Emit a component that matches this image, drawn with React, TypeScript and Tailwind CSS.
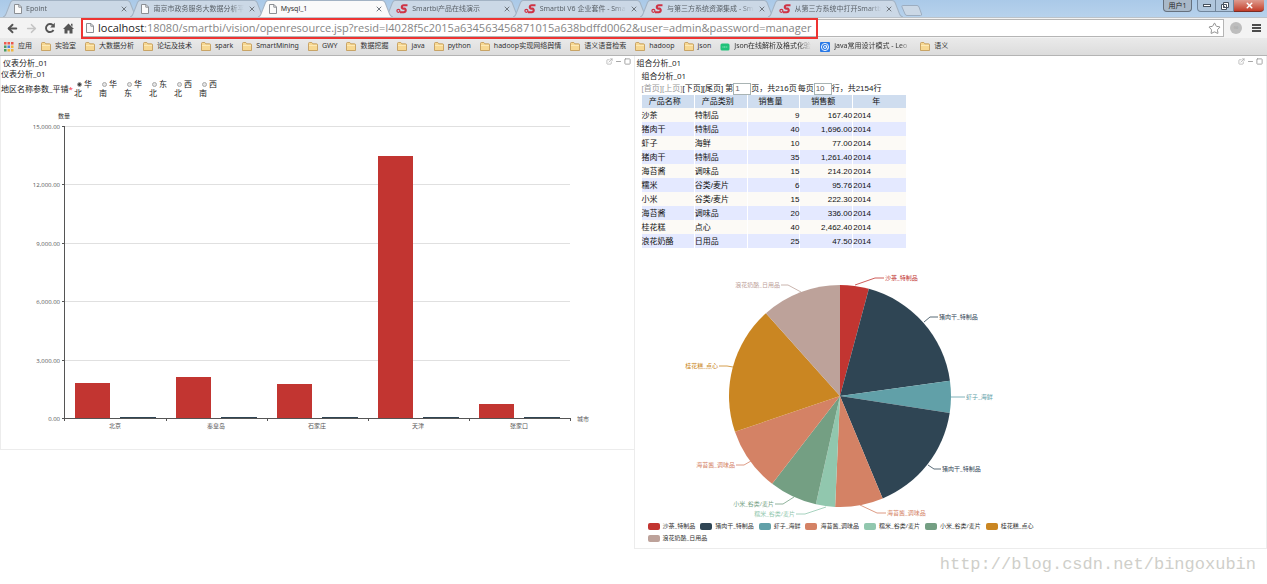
import { ArrowLeft, ArrowRight, ExternalLink, Minus, Square, Star, X } from "lucide-react";
import { useState } from "react";

const FONT = "font-['Open_Sans','Noto_Sans_CJK_SC',sans-serif]";
const CHROME_FONT = "font-['Noto_Sans','Noto_Sans_CJK_SC',sans-serif]";
const TABLE_FONT = "font-['Liberation_Sans','Noto_Sans_CJK_SC',sans-serif]";

const TABS = [
  { title: "Epoint", icon: "page" },
  { title: "南京市政务服务大数据分析平台", icon: "page" },
  { title: "Mysql_1", icon: "page" },
  { title: "Smartbi产品在线演示", icon: "smartbi" },
  { title: "Smartbi V6 企业套件 - Smartbi", icon: "smartbi" },
  { title: "与第三方系统资源集成 - Smartbi", icon: "smartbi" },
  { title: "从第三方系统中打开Smartbi", icon: "smartbi" },
];

const BOOKMARKS = [
  { title: "应用", icon: "apps" },
  { title: "实验室", icon: "folder" },
  { title: "大数据分析", icon: "folder" },
  { title: "论坛及技术", icon: "folder" },
  { title: "spark", icon: "folder" },
  { title: "SmartMining", icon: "folder" },
  { title: "GWY", icon: "folder" },
  { title: "数据挖掘", icon: "folder" },
  { title: "java", icon: "folder" },
  { title: "python", icon: "folder" },
  { title: "hadoop实现网络舆情", icon: "folder" },
  { title: "语义语音检索", icon: "folder" },
  { title: "hadoop", icon: "folder" },
  { title: "json", icon: "folder" },
  { title: "Json在线解析及格式化验证", icon: "json" },
  { title: "java常用设计模式 - Leo", icon: "at" },
  { title: "语义", icon: "folder" },
];

const REGIONS = ["华北", "华南", "华东", "东北", "西北", "西南"];

const CITIES = [
  { name: "北京", value: 1785 },
  { name: "秦皇岛", value: 2105 },
  { name: "石家庄", value: 1750 },
  { name: "天津", value: 13480 },
  { name: "张家口", value: 740 },
];

const COLUMNS = ["产品名称", "产品类别", "销售量", "销售额", "年"];

const ROWS = [
  ["沙茶", "特制品", "9", "167.40", "2014"],
  ["猪肉干", "特制品", "40", "1,696.00", "2014"],
  ["虾子", "海鲜", "10", "77.00", "2014"],
  ["猪肉干", "特制品", "35", "1,261.40", "2014"],
  ["海苔酱", "调味品", "15", "214.20", "2014"],
  ["糯米", "谷类/麦片", "6", "95.76", "2014"],
  ["小米", "谷类/麦片", "15", "222.30", "2014"],
  ["海苔酱", "调味品", "20", "336.00", "2014"],
  ["桂花糕", "点心", "40", "2,462.40", "2014"],
  ["浪花奶酪", "日用品", "25", "47.50", "2014"],
];

// label line: from the rim, to the elbow, to the text
const SLICES = [
  { name: "沙茶_特制品", value: 9, color: "#c23531", line: "220,37 240,30 249,30", x: 250, y: 30, side: "start" },
  { name: "猪肉干_特制品", value: 40, color: "#2f4554", line: "289,74 295,69 303,69", x: 304, y: 69, side: "start" },
  { name: "虾子_海鲜", value: 10, color: "#61a0a8", line: "316,149 322,149 330,149", x: 331, y: 149, side: "start" },
  { name: "猪肉干_特制品", value: 35, color: "#2f4554", line: "293,217 299,221 306,221", x: 307, y: 221, side: "start" },
  { name: "海苔酱_调味品", value: 15, color: "#d48265", line: "225,257 242,265 251,265", x: 252, y: 265, side: "start" },
  { name: "糯米_谷类/麦片", value: 6, color: "#91c7ae", line: "191,259 170,266 161,266", x: 160, y: 266, side: "end" },
  { name: "小米_谷类/麦片", value: 15, color: "#749f83", line: "159,249 148,256 140,256", x: 139, y: 256, side: "end" },
  { name: "海苔酱_调味品", value: 20, color: "#d48265", line: "116,213 109,217 101,217", x: 100, y: 217, side: "end" },
  { name: "桂花糕_点心", value: 40, color: "#ca8622", line: "98,119 92,118 84,118", x: 83, y: 118, side: "end" },
  { name: "浪花奶酪_日用品", value: 25, color: "#bda29a", line: "166,44 153,37 146,37", x: 145, y: 37, side: "end" },
];

const LEGEND = [0, 1, 2, 4, 5, 6, 8, 9].map((i) => SLICES[i]);

function PageIcon() {
  return (
    <svg width="8" height="10" viewBox="0 0 8 10" className="flex-none">
      <path d="M.5.5h4.5l2.5 2.5v6.5h-7z" fill="#fafafa" stroke="#8b8f94" />
      <path d="M4.8.5v2.7h2.7" fill="none" stroke="#8b8f94" />
    </svg>
  );
}

function SmartbiIcon() {
  return (
    <svg width="12" height="10" viewBox="0 0 12 10" className="flex-none">
      <path d="M11.500 1.200H7.800C5.300 1.200 5.100 4.400 7.500 4.600h.8c2.200.2 1.800 3.600-.5 3.600H4" fill="none" stroke="#cf3345" strokeWidth="2.100" />
      <circle cx="2.400" cy="6.800" r="1.500" fill="none" stroke="#cf3345" strokeWidth="1.200" />
    </svg>
  );
}

const APP_COLORS = ["#ef5a4c", "#ef5a4c", "#e9584b", "#4b9b62", "#4b83d8", "#f0b63c", "#4b9b62", "#f0b63c", "#f0b63c"];

function BookmarkIcon({ icon }: { icon: string }) {
  if (icon === "apps") {
    return (
      <svg width="10" height="10" viewBox="0 0 10 10" className="flex-none">
        {APP_COLORS.map((color, i) => (
          <rect key={i} x={(i % 3) * 3.5} y={Math.floor(i / 3) * 3.5} width="2.5" height="2.5" fill={color} />
        ))}
      </svg>
    );
  }
  if (icon === "json") {
    return (
      <svg width="10" height="10" viewBox="0 0 10 10" className="flex-none">
        <rect x=".5" y="1.5" width="9" height="7" rx="1.5" fill="#22c27a" />
        <path d="M2.5 5h5" stroke="#a5eecb" strokeDasharray="1 .6" />
      </svg>
    );
  }
  if (icon === "at") {
    return (
      <svg width="10" height="10" viewBox="0 0 10 10" className="flex-none">
        <rect width="10" height="10" rx="1" fill="#2878e6" />
        <circle cx="5" cy="5" r="3.6" fill="none" stroke="#fff" strokeWidth=".9" />
        <circle cx="5" cy="5" r="1.5" fill="none" stroke="#fff" strokeWidth=".9" />
        <path d="M6.7 3.2v2.4q.3 1.2 1.6.6" fill="none" stroke="#fff" strokeWidth=".8" />
      </svg>
    );
  }
  return (
    <svg width="10" height="9" viewBox="0 0 10 9" className="flex-none">
      <path d="M.5 8.5v-7q0-1 1-1h2.3l1 1.3h3.7q1 0 1 1v5.7z" fill="#f7d892" stroke="#bf9650" strokeWidth=".8" />
      <path d="M1 3h8v1H1z" fill="#fde9b6" />
    </svg>
  );
}

function TabStrip() {
  return (
    <div className="flex h-[17px] justify-between bg-gradient-to-b from-[#aac9e8] to-[#b7d2ec] pl-[3px]">
      <div className={`flex min-w-0 max-w-[920px] flex-1 ${CHROME_FONT}`}>
        {TABS.map((tab, i) => {
          const active = i === 2;
          return (
            <div key={i} className={active ? "relative z-10 min-w-0 flex-1" : "relative min-w-0 flex-1"}>
              <svg viewBox="0 0 135 17" preserveAspectRatio="none" className="absolute top-0 left-0 h-[17px] w-[106%]">
                <path
                  d="M0 17Q2 16.500 3 14L7.500 2.500Q8.500.5 10 .5H124Q126 .5 127 2.500L131.500 14Q132.500 16.500 135 17"
                  fill={active ? "#fafafa" : "#cbd8e6"}
                  stroke="#a3b3c4"
                />
              </svg>
              <button type="button" className="relative flex h-[17px] w-full items-center pt-px pr-[2px] pl-[11px] text-left">
                {tab.icon === "page" ? <PageIcon /> : <SmartbiIcon />}
                <span
                  className={
                    active
                      ? "ml-1 flex-1 text-[7px] whitespace-nowrap text-[#333]"
                      : "ml-1 flex-1 overflow-hidden mask-r-from-85% text-[7px] whitespace-nowrap text-[#5b6269]"
                  }
                >
                  {tab.title}
                </span>
                <X size={8} strokeWidth={3} className="ml-1 flex-none text-[#70777f]" />
              </button>
            </div>
          );
        })}
        <button type="button" aria-label="New tab" className="mt-[3px] ml-[6px] w-[22px]">
          <svg width="22" height="11" viewBox="0 0 22 11">
            <path d="M1.500.5H16q1.500 0 2 1.500l2.500 7q.5 1.500-1 1.500H6q-1.500 0-2-1.500L1 2Q.5.5 1.500.5z" fill="#cbd8e6" stroke="#9cadc0" />
          </svg>
        </button>
      </div>
      <div className="flex h-[12px] pr-[3px] text-[7px] leading-[11px]">
        <button type="button" className="mr-[5px] w-[29px] rounded-b-sm border border-t-0 border-[#66717e] bg-[#a9b9c9] text-[#222]">
          用户1
        </button>
        <button type="button" aria-label="Minimize" className="flex w-[19px] items-center justify-center rounded-bl-sm border border-t-0 border-[#71869c] bg-[#b0c6dc]">
          <span className="h-[3px] w-[8px] border border-[#46525f] bg-white" />
        </button>
        <button type="button" aria-label="Restore" className="flex w-[18px] items-center justify-center border-r border-b border-[#71869c] bg-[#b0c6dc]">
          <svg width="8" height="8" viewBox="0 0 8 8" fill="#fff" stroke="#46525f">
            <path d="M2.500.5h5v5h-5zM.5 2.500h5v5h-5zM2.500 4.500h1v1h-1z" />
          </svg>
        </button>
        <button type="button" aria-label="Close" className="flex w-[30px] items-center justify-center rounded-br-sm border-b border-[#7a2c24] bg-gradient-to-b from-[#dd9a8e] to-[#c23b28]">
          <X size={9} strokeWidth={4} color="#fff" />
        </button>
      </div>
    </div>
  );
}

function Toolbar() {
  const [url, setUrl] = useState(
    ":18080/smartbi/vision/openresource.jsp?resid=I4028f5c2015a634563456871015a638bdffd0062&user=admin&password=manager",
  );
  return (
    <div className="flex h-[21px] items-center border-t border-[#bcc3ca] bg-[#f3f3f3] pl-[6px] text-[#555]">
      <button type="button" aria-label="Back" className="w-[19px]">
        <ArrowLeft size={13} strokeWidth={3.5} />
      </button>
      <button type="button" aria-label="Forward" className="w-[19px] text-[#c4c4c4]">
        <ArrowRight size={13} strokeWidth={3} />
      </button>
      <button type="button" aria-label="Reload" className="w-[19px]">
        <svg width="12" height="12" viewBox="0 0 12 12">
          <path d="M9.500 8A4 4 0 1 1 8.800 3.200" fill="none" stroke="currentColor" strokeWidth="1.900" />
          <path d="M10.800.8v4.700H6.200z" fill="currentColor" />
        </svg>
      </button>
      <button type="button" aria-label="Home" className="w-[18px]">
        <svg width="11" height="11" viewBox="0 0 11 11" fill="currentColor">
          <path d="M5.500.5 11 6H9.500v4.500h-3V7.500h-2v3h-3V6H0zM8 .8h1.500v3L8 2.300z" />
        </svg>
      </button>
      <label className="relative flex h-[18px] flex-1 items-center border border-[#b5b5b5] bg-white pl-[4px] text-[11px]">
        <PageIcon />
        <span className="ml-1 text-[#222]">localhost</span>
        <input
          aria-label="Address"
          value={url}
          onChange={(e) => setUrl(e.target.value)}
          className="min-w-0 flex-1 text-[#858585] outline-none"
        />
        <Star size={13} strokeWidth={1.5} className="mr-[2px] text-[#777]" />
        {/* highlighted part of the address */}
        <span className="pointer-events-none absolute -top-[2px] -left-px h-[21px] w-[737px] border-2 border-[#ee3432]" />
      </label>
      <span className="ml-[6px] flex h-[12px] w-[12px] items-center justify-center rounded-full bg-[#bdbdbd] text-[7px] text-[#a5a5a5]">∞</span>
      <button type="button" aria-label="Menu" className="mr-[6px] ml-[10px] flex w-[9px] flex-col gap-px">
        <span className="h-[2px] bg-[#4c4c4c]" />
        <span className="h-[2px] bg-[#4c4c4c]" />
        <span className="h-[2px] bg-[#4c4c4c]" />
      </button>
    </div>
  );
}

function Bookmarks() {
  return (
    <nav className={`flex h-[18px] items-center gap-[9px] border-b border-[#b4b4b4] bg-gradient-to-b from-[#eaeaea] to-[#dcdcdc] pl-[4px] text-[7px] text-[#333] ${CHROME_FONT}`}>
      {BOOKMARKS.map((item, i) => (
        <a key={i} href="#" className="flex items-center gap-[4px] whitespace-nowrap">
          <BookmarkIcon icon={item.icon} />
          <span className={item.icon === "json" || item.icon === "at" ? "w-[77px] overflow-hidden mask-r-from-85%" : ""}>
            {item.title}
          </span>
        </a>
      ))}
    </nav>
  );
}

function PanelTitle({ children }: { children: string }) {
  return (
    <div className="flex h-[13px] items-center justify-between pl-[2px] text-[8px]">
      <h2>{children}</h2>
      <div className="flex gap-[2px] pr-[3px] pb-[2px] text-[#999]">
        <button type="button" aria-label="Open"><ExternalLink size={7} /></button>
        <button type="button" aria-label="Collapse"><Minus size={7} strokeWidth={3} /></button>
        <button type="button" aria-label="Maximize"><Square size={7} strokeWidth={3} /></button>
      </div>
    </div>
  );
}

function BarChart() {
  const step = 101;
  const base = 318;
  return (
    <svg className="mt-[2px] block h-[349px] w-full text-[6px]" fill="#555">
      <text x="63" y="18" textAnchor="middle" fill="#333">数量</text>
      {[15000, 12000, 9000, 6000, 3000, 0].map((value) => {
        const y = base - Math.round((value / 15000) * 292);
        return (
          <g key={value}>
            <rect x="64" y={y} width="505" height="1" fill={value ? "#e0e0e0" : "#555"} />
            <rect x="61" y={y} width="3" height="1" fill="#555" />
            <text x="59" y={y + 3} textAnchor="end">
              {value.toLocaleString("en-US", { minimumFractionDigits: 2 })}
            </text>
          </g>
        );
      })}
      {CITIES.map((city, i) => {
        const x = 64 + i * step;
        const h = Math.round((city.value / 15000) * 292);
        return (
          <g key={city.name}>
            <rect x={x + 10} y={base - h} width="35" height={h} fill="#c23531" />
            <rect x={x + 55} y={base - 1} width="36" height="1" fill="#2f4554" />
            <rect x={x + step} y={base} width="1" height="3" fill="#555" />
            <text x={x + 50} y={base + 10} textAnchor="middle">{city.name}</text>
          </g>
        );
      })}
      <rect x="63" y="26" width="1" height="295" fill="#555" />
      <text x="576" y={base + 3}>城市</text>
    </svg>
  );
}

function PieChart() {
  const cx = 205;
  const cy = 148;
  const r = 111;
  const total = SLICES.reduce((sum, s) => sum + s.value, 0);
  const point = (v: number) => {
    const a = (v / total) * 2 * Math.PI;
    return `${cx + r * Math.sin(a)} ${cy - r * Math.cos(a)}`;
  };
  let acc = 0;
  return (
    <svg className="block h-[272px] w-full text-[6px]">
      {SLICES.map((s, i) => {
        const from = acc;
        acc += s.value;
        return (
          <g key={i}>
            <path d={`M${cx} ${cy}L${point(from)}A${r} ${r} 0 0 1 ${point(acc)}Z`} fill={s.color} />
            <polyline points={s.line} fill="none" stroke={s.color} strokeWidth=".8" />
            <text x={s.x} y={s.y + 2} fill={s.color} textAnchor={s.side === "end" ? "end" : "start"}>
              {s.name}
            </text>
          </g>
        );
      })}
    </svg>
  );
}

function DashboardPanel() {
  const [region, setRegion] = useState("华北");
  return (
    <section className="min-w-0 border-b border-l border-[#ececec]">
      <PanelTitle>仪表分析_01</PanelTitle>
      <h3 className="text-[8px] leading-[9px]">仪表分析_01</h3>
      <div className="flex h-[20px] items-center text-[8px] leading-[9px]">
        <span className="w-[73px] whitespace-nowrap">
          地区名称参数_平铺<span className="text-red-500">*</span>
        </span>
        {REGIONS.map((name) => (
          <label key={name} className="mr-[7px] w-[18px] break-all">
            <input
              type="radio"
              name="region"
              checked={region === name}
              onChange={() => setRegion(name)}
              className="mr-[2px] ml-[3px] h-[5px] w-[5px] appearance-none rounded-full border border-[#aaa] bg-[#e4e4e4] align-middle checked:bg-[#444]"
            />
            {name}
          </label>
        ))}
      </div>
      <BarChart />
    </section>
  );
}

function AnalysisPanel() {
  const [page, setPage] = useState("1");
  const [size, setSize] = useState("10");
  return (
    <section className="min-w-0 border-x border-b border-[#ececec]">
      <PanelTitle>组合分析_01</PanelTitle>
      <div className="pl-[7px]">
        <h3 className="text-[8px] leading-[13px]">组合分析_01</h3>
        <div className={`flex h-[13px] items-center text-[8px] whitespace-nowrap ${TABLE_FONT}`}>
          <button type="button" disabled className="text-[#999]">[首页]</button>
          <button type="button" disabled className="text-[#999]">[上页]</button>
          <button type="button">[下页]</button>
          <button type="button">[尾页]</button>
          <label className="ml-[2px] flex items-center">
            第
            <input value={page} onChange={(e) => setPage(e.target.value)} className="h-[12px] w-[18px] border border-[#a9b4b4] px-px text-[#666]" />
            页，共216页
          </label>
          <label className="ml-px flex items-center">
            每页
            <input value={size} onChange={(e) => setSize(e.target.value)} className="h-[12px] w-[18px] border border-[#a9b4b4] px-px text-[#666]" />
            行，共2154行
          </label>
        </div>
        <table className={`w-[264px] table-fixed border-collapse text-[8px] leading-[13px] text-[#111] ${TABLE_FONT}`}>
          <thead>
            <tr className="h-[13px] bg-[#cfddef]">
              {COLUMNS.map((name) => (
                <th key={name} className="border-r border-white p-0 pr-1.5 font-normal last:border-r-0">{name}</th>
              ))}
            </tr>
          </thead>
          <tbody>
            {ROWS.map((row, i) => (
              <tr key={i} className="h-[14px] odd:bg-[#fcfaf6] even:bg-[#e4e9ff]">
                {row.map((cell, j) => (
                  <td
                    key={j}
                    className={
                      j === 2 || j === 3
                        ? "border-r border-white p-0 text-right"
                        : "border-r border-white p-0 last:border-r-0"
                    }
                  >
                    {cell}
                  </td>
                ))}
              </tr>
            ))}
          </tbody>
        </table>
      </div>
      <PieChart />
      <ul className="ml-[13px] flex max-w-[400px] flex-wrap gap-x-[5px] pb-1 text-[6px] leading-[12px] text-[#333]">
        {LEGEND.map((s) => (
          <li key={s.name} className="flex items-center gap-[3px]">
            <span className="h-[7px] w-[12px] rounded-[2px]" style={{ backgroundColor: s.color }} />
            {s.name}
          </li>
        ))}
      </ul>
    </section>
  );
}

export default function App() {
  return (
    <div className={`bg-white text-[#222] ${FONT}`}>
      <header>
        <TabStrip />
        <Toolbar />
        <Bookmarks />
      </header>
      <main className="grid grid-cols-2 items-start">
        <DashboardPanel />
        <AnalysisPanel />
      </main>
      <footer className="pt-1 pr-[11px] text-right font-['Liberation_Mono',monospace] text-[17px] leading-6 text-[#cfcfca]">
        http://blog.csdn.net/bingoxubin
      </footer>
    </div>
  );
}
